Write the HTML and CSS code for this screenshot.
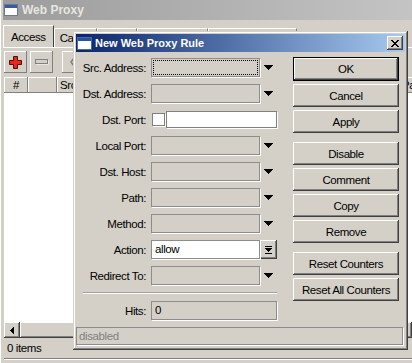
FILE: index.html
```html
<!DOCTYPE html>
<html>
<head>
<meta charset="utf-8">
<link rel="stylesheet" href="styles.css">
</head>
<body>
<div class="win">
  <div class="win-title">
    <svg class="wicon" width="14" height="12" viewBox="0 0 14 12"><rect x="0.5" y="0.5" width="13" height="11" fill="#fff" stroke="#6a7890"/><rect x="1" y="1" width="12" height="3" fill="#3c5a9a"/></svg>
    <span>Web Proxy</span>
  </div>
  <div class="tabs">
    <div class="tab active">Access</div>
    <div class="tab">Cache</div>
    <div class="tab">Direct</div>
    <div class="tab">Connections</div>
    <div class="tab">Cache Contents</div>
  </div>
  <div class="panel">
    <div class="toolbar">
      <div class="tb"><svg width="13" height="13" viewBox="0 0 13 13"><path d="M4.5 0.5h4v4h4v4h-4v4h-4v-4h-4v-4h4z" fill="#e8281c" stroke="#5a0a06"/></svg></div>
      <div class="tb"><svg width="14" height="6" viewBox="0 0 14 6"><rect x="1.5" y="1.5" width="12" height="4" fill="#fff" stroke="none"/><rect x="0.5" y="0.5" width="12" height="4" fill="#d4d0c8" stroke="#808080"/></svg></div>
      <div class="tb tb-sep"><svg width="12" height="12" viewBox="0 0 12 12"><path d="M6 2 L3 6 L6 10" fill="none" stroke="#808080" stroke-width="1.5"/></svg></div>
      <div class="tb"></div>
    </div>
    <div class="grid">
      <div class="ghead">
        <div class="gc c1">#</div>
        <div class="gc c2"></div>
        <div class="gc c3">Src. Address</div>
        <div class="gc c4">Dst. Address</div>
        <div class="gc c5">Dst. Port</div>
        <div class="gc c6">Dst. Host</div>
        <div class="gc c7">Path</div>
      </div>
      <div class="gbody"></div>
      <div class="hscroll">
        <div class="sbtn"><svg width="4" height="7" viewBox="0 0 4 7"><path d="M3 0h1v7H3zM2 1h1v5H2zM1 2h1v3H1zM0 3h1v1H0z"/></svg></div>
        <div class="thumb"></div>
      </div>
    </div>
    <div class="status">0 items</div>
    <div class="win-bottom"></div>
  </div>
</div>

<div class="dlg">
  <div class="dlg-title">
    <svg class="dicon" width="15" height="13" viewBox="0 0 15 13"><rect x="0.5" y="0.5" width="14" height="12" fill="#fff" stroke="#4a6aa8"/><rect x="1" y="1" width="13" height="3" fill="#2c4f9e"/></svg>
    <span class="dlg-name">New Web Proxy Rule</span>
    <span class="xbtn"><svg width="8" height="7" viewBox="0 0 8 7"><path d="M0 0h2v1H0zM6 0h2v1H6zM1 1h2v1H1zM5 1h2v1H5zM2 2h4v1H2zM3 3h2v1H3zM2 4h4v1H2zM1 5h2v1H1zM5 5h2v1H5zM0 6h2v1H0zM6 6h2v1H6z"/></svg></span>
  </div>
  <div class="dlg-body">
    <div class="form">
      <span class="lbl">Src. Address:</span>
      <div class="ctl"><div class="fld focus"></div><span class="arr"><svg width="9" height="5" viewBox="0 0 9 5"><path d="M0 0h9v1H0zM1 1h7v1H1zM2 2h5v1H2zM3 3h3v1H3zM4 4h1v1H4z"/></svg></span></div>

      <span class="lbl">Dst. Address:</span>
      <div class="ctl"><div class="fld"></div><span class="arr"><svg width="9" height="5" viewBox="0 0 9 5"><path d="M0 0h9v1H0zM1 1h7v1H1zM2 2h5v1H2zM3 3h3v1H3zM4 4h1v1H4z"/></svg></span></div>

      <span class="lbl">Dst. Port:</span>
      <div class="ctl"><span class="chk"></span><div class="txt"></div></div>

      <span class="lbl">Local Port:</span>
      <div class="ctl"><div class="fld"></div><span class="arr"><svg width="9" height="5" viewBox="0 0 9 5"><path d="M0 0h9v1H0zM1 1h7v1H1zM2 2h5v1H2zM3 3h3v1H3zM4 4h1v1H4z"/></svg></span></div>

      <span class="lbl">Dst. Host:</span>
      <div class="ctl"><div class="fld"></div><span class="arr"><svg width="9" height="5" viewBox="0 0 9 5"><path d="M0 0h9v1H0zM1 1h7v1H1zM2 2h5v1H2zM3 3h3v1H3zM4 4h1v1H4z"/></svg></span></div>

      <span class="lbl">Path:</span>
      <div class="ctl"><div class="fld"></div><span class="arr"><svg width="9" height="5" viewBox="0 0 9 5"><path d="M0 0h9v1H0zM1 1h7v1H1zM2 2h5v1H2zM3 3h3v1H3zM4 4h1v1H4z"/></svg></span></div>

      <span class="lbl">Method:</span>
      <div class="ctl"><div class="fld"></div><span class="arr"><svg width="9" height="5" viewBox="0 0 9 5"><path d="M0 0h9v1H0zM1 1h7v1H1zM2 2h5v1H2zM3 3h3v1H3zM4 4h1v1H4z"/></svg></span></div>

      <span class="lbl">Action:</span>
      <div class="ctl"><div class="fld white">allow</div><span class="dbtn"><svg width="7" height="8" viewBox="0 0 7 8"><path d="M0 0h7v1H0zM0 2h7v1H0zM1 3h5v1H1zM2 4h3v1H2zM3 5h1v1H3zM0 7h7v1H0z"/></svg></span></div>

      <span class="lbl">Redirect To:</span>
      <div class="ctl"><div class="fld"></div><span class="arr"><svg width="9" height="5" viewBox="0 0 9 5"><path d="M0 0h9v1H0zM1 1h7v1H1zM2 2h5v1H2zM3 3h3v1H3zM4 4h1v1H4z"/></svg></span></div>

      <div class="sep"></div>

      <span class="lbl">Hits:</span>
      <div class="ctl"><div class="fld wide">0</div></div>
    </div>
    <div class="btns">
      <div class="btn default">OK</div>
      <div class="btn">Cancel</div>
      <div class="btn">Apply</div>
      <div class="btn group">Disable</div>
      <div class="btn">Comment</div>
      <div class="btn">Copy</div>
      <div class="btn">Remove</div>
      <div class="btn group">Reset Counters</div>
      <div class="btn">Reset All Counters</div>
    </div>
    <div class="dstatus">disabled</div>
  </div>
</div>
</body>
</html>
```

FILE: styles.css
```css
* { box-sizing: border-box; }
html, body { margin: 0; padding: 0; }
body {
  width: 412px;
  height: 363px;
  overflow: hidden;
  position: relative;
  background: #d4d0c8;
  font-family: "Liberation Sans", Arial, sans-serif;
  font-size: 11.5px;
  letter-spacing: -0.4px;
  color: #000;
}

/* ---------- background window ---------- */
.win {
  width: 412px;
  height: 363px;
  overflow: hidden;
  padding-left: 3px;
  display: flex;
  flex-direction: column;
  box-shadow: inset 1px 0 #fff;
}
.win-title {
  flex: none;
  height: 20px;
  display: flex;
  align-items: center;
  gap: 4px;
  padding-left: 1px;
  background: linear-gradient(90deg, #9c9c9c, #c4c4c4);
  color: #e8e6e0;
  font-weight: bold;
  font-size: 12px;
  letter-spacing: 0;
}
.tabs {
  flex: none;
  display: flex;
  align-items: flex-end;
  height: 22px;
  margin-top: 5px;
  overflow: hidden;
}
.tab {
  flex: none;
  height: 19px;
  padding: 0 5px;
  display: flex;
  align-items: center;
  border-top: 1px solid #fff;
  border-left: 1px solid #fff;
  border-right: 1px solid #808080;
  white-space: nowrap;
}
.tab.active {
  height: 23px;
  margin-bottom: -1px;
  padding: 0 7px;
  position: relative;
  z-index: 1;
  background: #d4d0c8;
  border-right-color: #404040;
}
.panel {
  flex: 1;
  display: flex;
  flex-direction: column;
  border-top: 1px solid #fff;
  padding: 3px 0 0 1px;
}
.toolbar {
  flex: none;
  height: 22px;
  display: flex;
  gap: 3px;
}
.tb {
  flex: none;
  width: 23px;
  height: 22px;
  display: flex;
  align-items: center;
  justify-content: center;
  box-shadow: inset -1px -1px #808080, inset 1px 1px #fff;
}
.tb-sep { margin-left: 6px; }
.grid {
  flex: none;
  margin-top: 4px;
  display: flex;
  flex-direction: column;
}
.ghead {
  height: 16px;
  display: flex;
  overflow: hidden;
}
.gc {
  flex: none;
  height: 16px;
  padding-left: 3px;
  line-height: 16px;
  white-space: nowrap;
  overflow: hidden;
  box-shadow: inset -1px -1px #808080, inset 1px 1px #fff;
}
.c1 { width: 24px; padding-left: 0; text-align: center; }
.c2 { width: 29px; }
.c3 { width: 83px; }
.c4 { width: 83px; }
.c5 { width: 60px; }
.c6 { width: 116px; }
.c7 { width: 70px; }
.gbody {
  height: 229px;
  background: #fff;
}
.hscroll {
  height: 16px;
  display: flex;
  background: #e8e6e2;
}
.sbtn {
  flex: none;
  width: 16px;
  height: 16px;
  display: flex;
  align-items: center;
  justify-content: center;
  background: #d4d0c8;
  box-shadow: inset -1px -1px #404040, inset 1px 1px #fff, inset -2px -2px #808080;
}
.thumb {
  flex: 1;
  background: #d4d0c8;
  box-shadow: inset -1px -1px #404040, inset 1px 1px #fff, inset -2px -2px #808080;
}
.status {
  height: 20px;
  display: flex;
  align-items: center;
  padding-left: 3px;
}
.win-bottom {
  height: 5px;
  box-shadow: inset 0 1px #808080, inset 0 2px #fff;
}

/* ---------- dialog ---------- */
.dlg {
  position: absolute;
  left: 73px;
  top: 31px;
  width: 335px;
  height: 319px;
  padding: 3px;
  background: #d4d0c8;
  box-shadow: inset -1px -1px #404040, inset 1px 1px #d4d0c8, inset -2px -2px #808080, inset 2px 2px #fff;
}
.dlg-title {
  height: 18px;
  display: flex;
  align-items: center;
  padding: 0 2px 0 1px;
  background: linear-gradient(90deg, #0a246a, #a6caf0);
  color: #fff;
}
.dicon { flex: none; }
.dlg-name {
  margin-left: 3px;
  font-weight: bold;
  font-size: 11px;
  letter-spacing: 0;
}
.xbtn {
  margin-left: auto;
  width: 16px;
  height: 14px;
  display: flex;
  align-items: center;
  justify-content: center;
  background: #d4d0c8;
  box-shadow: inset -1px -1px #404040, inset 1px 1px #fff, inset -2px -2px #808080;
}
.dlg-body {
  display: grid;
  grid-template-columns: 214px 106px;
  column-gap: 3px;
  align-items: start;
  padding-top: 6px;
}
.form {
  display: grid;
  grid-template-columns: 70px 126px;
  grid-template-rows: repeat(9, 19px) 2px 19px;
  column-gap: 5px;
  row-gap: 7px;
  align-items: center;
}
.lbl {
  text-align: right;
  white-space: nowrap;
}
.ctl {
  display: flex;
  align-items: center;
  height: 19px;
}
.fld {
  width: 109px;
  height: 19px;
  border: 1px solid #8c8c8c;
  box-shadow: 1px 1px 0 #fff;
  padding-left: 3px;
  line-height: 17px;
  position: relative;
}
.fld.focus::after {
  content: "";
  position: absolute;
  inset: 1px;
  border: 1px dotted #000;
}
.fld.white { background: #fff; }
.fld.wide { width: 126px; }
.arr {
  width: 17px;
  height: 19px;
  display: flex;
  align-items: center;
  justify-content: center;
}
.dbtn {
  width: 17px;
  height: 19px;
  display: flex;
  align-items: center;
  justify-content: center;
  box-shadow: inset -1px -1px #404040, inset 1px 1px #fff, inset -2px -2px #808080;
}
.chk {
  width: 13px;
  height: 13px;
  margin-left: 1px;
  background: #fff;
  border: 1px solid #808080;
  box-shadow: 1px 1px 0 #fff;
}
.txt {
  width: 111px;
  height: 17px;
  margin-left: 1px;
  background: #fff;
  border: 1px solid #808080;
  box-shadow: 1px 1px 0 #fff;
}
.sep {
  grid-column: 1 / -1;
  margin-left: 7px;
  height: 2px;
  box-shadow: inset 0 1px #a0a0a0, inset 0 -1px #fff;
}
.btns {
  margin-top: -1px;
  display: flex;
  flex-direction: column;
  gap: 3px;
}
.btn {
  height: 23px;
  display: flex;
  align-items: center;
  justify-content: center;
  white-space: nowrap;
  box-shadow: inset -1px -1px #404040, inset 1px 1px #fff, inset -2px -2px #808080;
}
.btn.default {
  height: 24px;
  box-shadow: inset 0 0 0 1px #000, inset -2px -2px #404040, inset 2px 2px #fff, inset -3px -3px #808080;
}
.btn.group { margin-top: 6px; }
.dstatus {
  grid-column: 1 / -1;
  margin-top: 7px;
  width: 327px;
  height: 18px;
  border: 1px solid #8c8c8c;
  box-shadow: 1px 1px 0 #fff;
  padding-left: 2px;
  line-height: 16px;
  color: #808080;
}
```
